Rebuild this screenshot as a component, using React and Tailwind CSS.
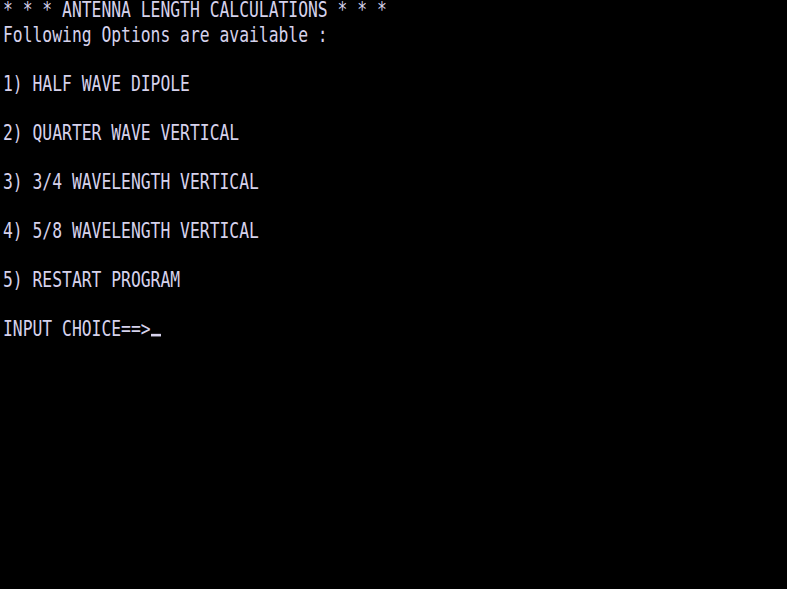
const lines = [
  "* * * ANTENNA LENGTH CALCULATIONS * * *",
  "Following Options are available :",
  "",
  "1) HALF WAVE DIPOLE",
  "",
  "2) QUARTER WAVE VERTICAL",
  "",
  "3) 3/4 WAVELENGTH VERTICAL",
  "",
  "4) 5/8 WAVELENGTH VERTICAL",
  "",
  "5) RESTART PROGRAM",
  "",
];

function Row({ children }) {
  return (
    <div className="h-[24.54px] flex items-center pl-[3px] whitespace-pre">
      <span className="block scale-y-[1.3] origin-center -translate-y-[1px]">{children}</span>
    </div>
  );
}

export default function App() {
  return (
    <div
      className="w-[787px] h-[589px] bg-black text-[#d6d2ec] text-[16.35px] leading-none overflow-hidden"
      style={{ fontFamily: '"DejaVu Sans Mono", "Liberation Mono", monospace' }}
    >
      {lines.map((l, i) => (
        <Row key={i}>{l}</Row>
      ))}
      <Row>
        INPUT CHOICE==&gt;<span className="inline-block w-[10px] h-[2px] bg-[#d6d2ec] align-baseline" />
      </Row>
    </div>
  );
}
